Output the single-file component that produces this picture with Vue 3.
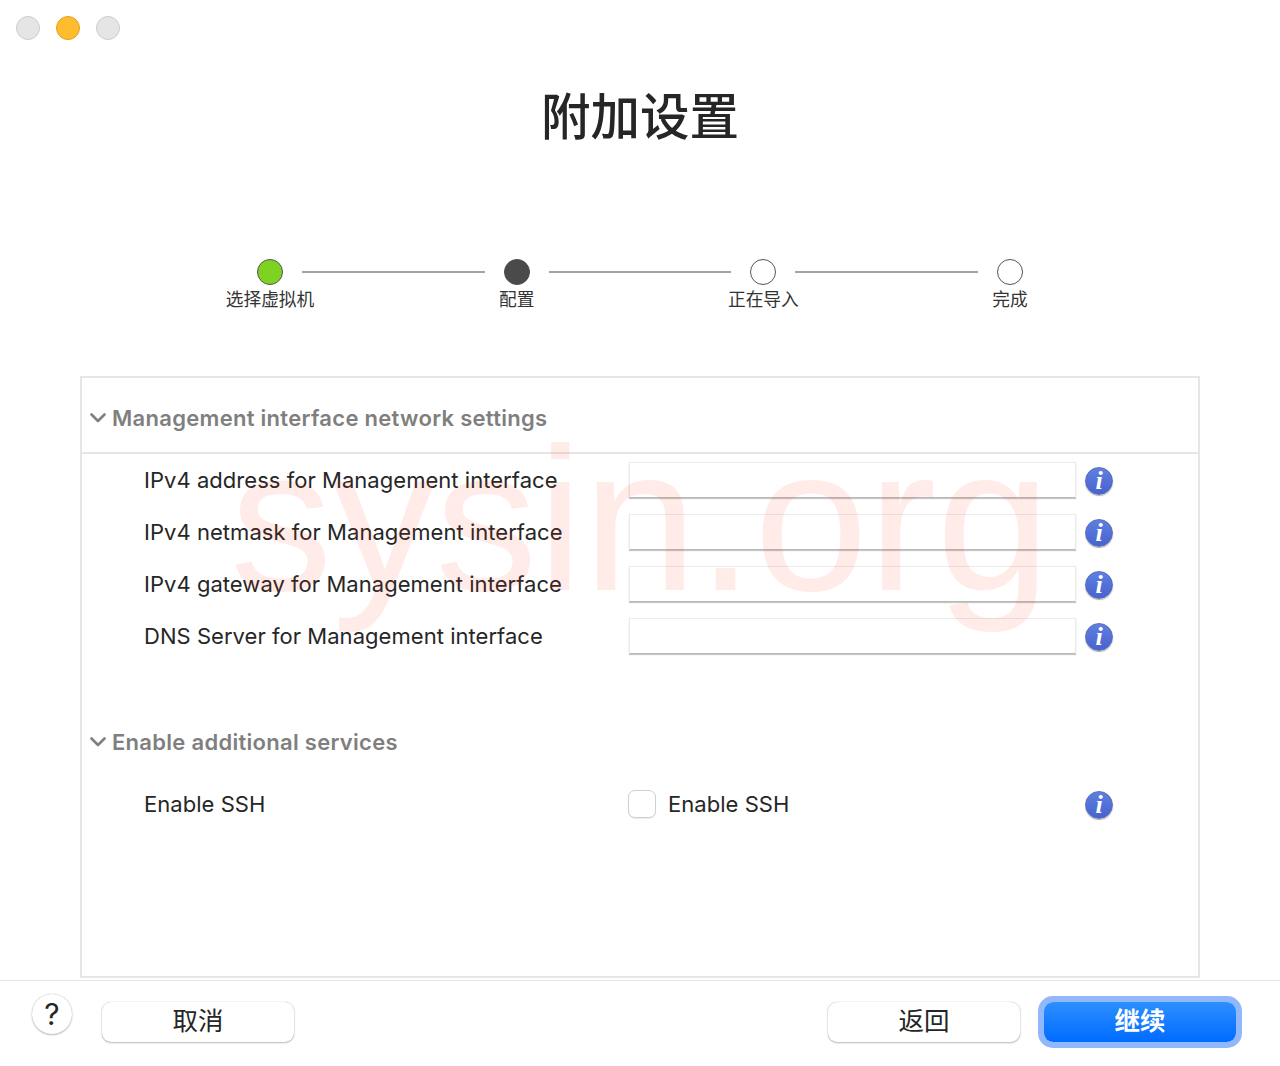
<script setup>
const steps = [
  { label: '选择虚拟机', state: 'done' },
  { label: '配置', state: 'current' },
  { label: '正在导入', state: 'todo' },
  { label: '完成', state: 'todo' },
]
const fields = [
  'IPv4 address for Management interface',
  'IPv4 netmask for Management interface',
  'IPv4 gateway for Management interface',
  'DNS Server for Management interface',
]
</script>

<template>
  <div class="window">
    <div class="lights">
      <span class="light"></span>
      <span class="light amber"></span>
      <span class="light"></span>
    </div>
    <h1 class="title">附加设置</h1>
    <div class="stepper">
      <template v-for="(s, i) in steps" :key="s.label">
        <div class="step">
          <span class="dot" :class="s.state"></span>
          <span class="step-label">{{ s.label }}</span>
        </div>
        <span v-if="i < steps.length - 1" class="connector"></span>
      </template>
    </div>
    <section class="panel">
      <div class="section-head first">
        <svg class="chev" width="16" height="10" viewBox="0 0 16 10"><path d="M1.5 1.5 8 8l6.5-6.5" fill="none" stroke="#7f7f7f" stroke-width="2.6" stroke-linecap="round" stroke-linejoin="round"/></svg>
        <span>Management interface network settings</span>
      </div>
      <div class="fields">
        <div v-for="f in fields" :key="f" class="row">
          <label class="label">{{ f }}</label>
          <div class="input"></div>
          <span class="info"><i>i</i></span>
        </div>
      </div>
      <div class="section-head second">
        <svg class="chev" width="16" height="10" viewBox="0 0 16 10"><path d="M1.5 1.5 8 8l6.5-6.5" fill="none" stroke="#7f7f7f" stroke-width="2.6" stroke-linecap="round" stroke-linejoin="round"/></svg>
        <span>Enable additional services</span>
      </div>
      <div class="row ssh">
        <span class="label">Enable SSH</span>
        <div class="check-wrap">
          <span class="check"></span>
          <span class="check-text">Enable SSH</span>
        </div>
        <span class="info"><i>i</i></span>
      </div>
    </section>
    <footer class="footer">
      <button class="help">?</button>
      <button class="btn cancel">取消</button>
      <span class="spacer"></span>
      <button class="btn">返回</button>
      <button class="btn primary">继续</button>
    </footer>
    <div class="watermark">sysin.org</div>
  </div>
</template>

<style scoped>
.window {
  position: relative;
  width: 1280px;
  height: 1066px;
  overflow: hidden;
  background: #fff;
  color: #262626;
  font-family: Inter, "Noto Sans CJK SC", sans-serif;
}
.lights {
  display: flex;
  gap: 16px;
  padding: 16px 16px 0;
}
.light {
  width: 24px;
  height: 24px;
  box-sizing: border-box;
  border-radius: 50%;
  background: #e5e5e5;
  border: 1px solid #cdcdcd;
}
.light.amber {
  background: #febc2e;
  border-color: #e3a023;
}
.title {
  margin: 38px 0 0;
  text-align: center;
  font-size: 49.5px;
  line-height: 72px;
  font-weight: 500;
  font-family: "Noto Sans CJK SC", sans-serif;
  color: #262626;
}
.stepper {
  display: flex;
  align-items: flex-start;
  margin: 109px 0 0 238px;
}
.step {
  width: 64px;
  display: flex;
  flex-direction: column;
  align-items: center;
}
.dot {
  width: 26px;
  height: 26px;
  box-sizing: border-box;
  border-radius: 50%;
  border: 1px solid #555;
  background: #fff;
}
.dot.done { background: #7ed321; }
.dot.current { background: #4a4a4a; border-color: #4a4a4a; }
.step-label {
  margin-top: 0;
  font-size: 17.7px;
  line-height: 26px;
  white-space: nowrap;
  font-family: "Noto Sans CJK SC", sans-serif;
  color: #333;
}
.connector {
  width: 182.67px;
  height: 2px;
  margin-top: 12px;
  background: #a3a3a3;
}
.panel {
  box-sizing: border-box;
  height: 602px;
  margin: 65px 80px 0;
  border: 2px solid #e6e6e6;
}
.section-head {
  display: flex;
  align-items: center;
  gap: 6px;
  padding-left: 8px;
  font-size: 22px;
  font-weight: 600;
  letter-spacing: .29px;
  color: #7f7f7f;
}
.section-head.first {
  height: 76px;
  padding-top: 5px;
  box-sizing: border-box;
  border-bottom: 2px solid #e6e6e6;
}
.section-head.second {
  height: 40px;
  margin-top: 60px;
}
.row {
  display: flex;
  align-items: center;
  height: 52px;
  padding-left: 62px;
}
.row.ssh {
  margin-top: 22px;
  height: 40px;
}
.label {
  width: 485px;
  flex: none;
  font-size: 22px;
  letter-spacing: .04px;
  color: #262626;
}
.input {
  width: 447px;
  height: 36px;
  box-sizing: border-box;
  background: #fff;
  border: 1px solid #ebebeb;
  border-bottom: 1px solid #b8b8b8;
  box-shadow: 0 1px 1px rgba(0,0,0,.22);
}
.check-wrap {
  width: 448px;
  display: flex;
  align-items: center;
  gap: 12px;
  margin-left: -1px;
  box-sizing: border-box;
  font-size: 22px;
  letter-spacing: .04px;
}
.check {
  width: 28px;
  height: 28px;
  box-sizing: border-box;
  border-radius: 7px;
  border: 1px solid #cfcfcf;
  background: #fff;
  box-shadow: 0 1px 1px rgba(0,0,0,.08);
}
.info {
  width: 28px;
  height: 28px;
  margin-left: 9px;
  margin-top: 2px;
  border-radius: 50%;
  background: linear-gradient(#5f7fe0, #4763cf);
  border: 1px solid #5a6fb8;
  box-shadow: 0 1px 1px rgba(0,0,0,.3);
  box-sizing: border-box;
  display: flex;
  align-items: center;
  justify-content: center;
  color: #fff;
  font: italic 700 26px/1 "Liberation Serif", serif;
}
.info i { display: block; }
.footer {
  position: absolute;
  left: 0;
  right: 0;
  top: 980px;
  height: 86px;
  box-sizing: border-box;
  border-top: 1px solid #e6e6e6;
  display: flex;
  align-items: flex-start;
  padding: 21px 44px 0 32px;
}
.help {
  width: 40px;
  height: 40px;
  margin-top: -8px;
  padding: 0;
  border: 0;
  border-radius: 50%;
  background: #fff;
  box-shadow: 0 0 1px rgba(0,0,0,.35), 0 1px 2px rgba(0,0,0,.25);
  font-size: 30px;
  line-height: 36px;
  font-weight: 400;
  font-family: Inter, sans-serif;
  color: #262626;
}
.btn {
  width: 192px;
  height: 40px;
  padding: 0 0 6px;
  border: 0;
  border-radius: 9px;
  background: #fff;
  box-shadow: 0 0 1px rgba(0,0,0,.35), 0 1px 2px rgba(0,0,0,.25);
  font-family: "Noto Sans CJK SC", sans-serif;
  font-size: 25.5px;
  line-height: 34px;
  color: #262626;
}
.cancel { margin-left: 30px; }
.spacer { flex: 1; }
.primary {
  margin-left: 24px;
  background: linear-gradient(#2d8fff, #006bff);
  color: #fff;
  box-shadow: 0 0 0 6px #90b8fb;
  font-weight: 700;
}
.watermark {
  position: absolute;
  left: 230px;
  top: 404px;
  font: 205px/230px "Liberation Sans", sans-serif;
  color: rgba(250, 40, 10, .095);
  white-space: nowrap;
  pointer-events: none;
}
</style>
